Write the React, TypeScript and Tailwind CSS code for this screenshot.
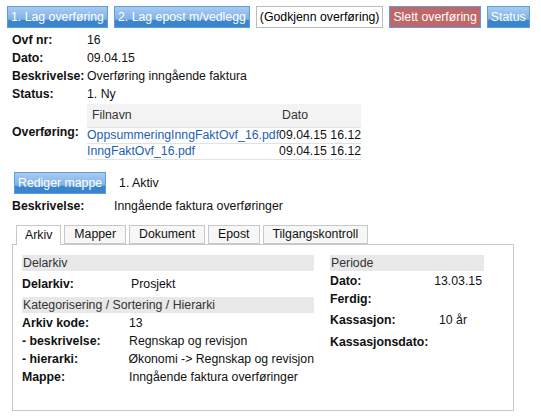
export default function App() {
  const blueBtn =
    "h-[22px] px-[3px] whitespace-nowrap border border-[#5c9de0] text-white leading-none bg-[linear-gradient(#aacbf0,#7eb1e8_62%,#3b85cf_64%,#3b85cf)]"

  return (
    <div className="w-[541px] h-[419px] bg-white text-[12.3px] text-[#111] whitespace-nowrap font-['Liberation_Sans',Arial,sans-serif] overflow-hidden">
      {/* Toolbar */}
      <div className="flex gap-[6px] pl-[7px] pt-[6px]">
        <button className={blueBtn}>1. Lag overføring</button>
        <button className={blueBtn}>2. Lag epost m/vedlegg</button>
        <button className="h-[22px] px-[3px] border border-[#bcbcbc] bg-white text-black leading-none">
          (Godkjenn overføring)
        </button>
        <button className="h-[22px] px-[3px] border border-[#5c9de0] bg-[#c06767] text-white leading-none">
          Slett overføring
        </button>
        <button className={blueBtn}>Status</button>
      </div>

      {/* Info */}
      <div className="pl-[12px] mt-[3px]">
        <div className="flex h-[18px] items-center">
          <div className="w-[75px] font-bold">Ovf nr:</div>
          <div>16</div>
        </div>
        <div className="flex h-[18px] items-center">
          <div className="w-[75px] font-bold">Dato:</div>
          <div>09.04.15</div>
        </div>
        <div className="flex h-[18px] items-center">
          <div className="w-[75px] font-bold">Beskrivelse:</div>
          <div>Overføring inngående faktura</div>
        </div>
        <div className="flex h-[18px] items-center">
          <div className="w-[75px] font-bold">Status:</div>
          <div>1. Ny</div>
        </div>
        <div className="flex items-center mt-[1px]">
          <div className="w-[75px] font-bold">Overføring:</div>
          <div className="grid grid-cols-[auto_auto]">
            <div className="h-[24px] flex items-center pl-[5px] bg-[#f3f3f3] border-b border-[#e2e2e2] text-[#333]">Filnavn</div>
            <div className="h-[24px] flex items-center pl-[3px] bg-[#f3f3f3] border-b border-[#e2e2e2] text-[#333]">Dato</div>
            <a className="h-[16px] flex items-center border-b border-[#e2e2e2] text-[#1f5fb4]">OppsummeringInngFaktOvf_16.pdf</a>
            <div className="h-[16px] flex items-center justify-end border-b border-[#e2e2e2]">09.04.15 16.12</div>
            <a className="h-[16px] flex items-center border-b border-[#e2e2e2] text-[#1f5fb4]">InngFaktOvf_16.pdf</a>
            <div className="h-[16px] flex items-center justify-end border-b border-[#e2e2e2]">09.04.15 16.12</div>
          </div>
        </div>
      </div>

      {/* Mappe */}
      <div className="flex items-center gap-[13px] pl-[14px] mt-[12px]">
        <button className={blueBtn}>Rediger mappe</button>
        <span>1. Aktiv</span>
      </div>
      <div className="flex h-[18px] items-center pl-[12px] mt-[3px]">
        <div className="w-[102px] font-bold">Beskrivelse:</div>
        <div>Inngående faktura overføringer</div>
      </div>

      {/* Tabs */}
      <div className="ml-[12px] mr-[27px] mt-[9px]">
        <div className="flex gap-[3px] pl-[4px] h-[20px] items-end">
          <div className="h-[20px] px-[8px] flex items-center border border-b-0 border-[#c8c8c8] bg-white relative top-[1px]">
            Arkiv
          </div>
          <div className="h-[19px] px-[9px] flex items-center border border-[#c8c8c8] bg-[#f7f7f7]">Mapper</div>
          <div className="h-[19px] px-[9px] flex items-center border border-[#c8c8c8] bg-[#f7f7f7]">Dokument</div>
          <div className="h-[19px] px-[9px] flex items-center border border-[#c8c8c8] bg-[#f7f7f7]">Epost</div>
          <div className="h-[19px] px-[9px] flex items-center border border-[#c8c8c8] bg-[#f7f7f7]">Tilgangskontroll</div>
        </div>
        <div className="h-[167px] border border-[#c8c8c8] pl-[9px] pt-[10px] flex gap-[16px]">
          {/* Left column */}
          <div className="w-[292px]">
            <div className="h-[16px] bg-[#e8e8e8] flex items-center pl-[1px] text-[#333]">Delarkiv</div>
            <div className="flex h-[26px] items-center">
              <div className="w-[109px] font-bold">Delarkiv:</div>
              <div>Prosjekt</div>
            </div>
            <div className="h-[16px] bg-[#e8e8e8] flex items-center pl-[1px] text-[#333]">
              Kategorisering / Sortering / Hierarki
            </div>
            <div className="mt-[1px]">
              {[
                ["Arkiv kode:", "13"],
                ["- beskrivelse:", "Regnskap og revisjon"],
                ["- hierarki:", "Økonomi -> Regnskap og revisjon"],
                ["Mappe:", "Inngående faktura overføringer"],
              ].map(([k, v]) => (
                <div key={k} className="flex h-[18px] items-center">
                  <div className="w-[107px] font-bold">{k}</div>
                  <div>{v}</div>
                </div>
              ))}
            </div>
          </div>

          {/* Right column */}
          <div className="w-[154px]">
            <div className="h-[16px] bg-[#e8e8e8] flex items-center pl-[1px] text-[#333]">Periode</div>
            <div className="flex h-[20px] items-center">
              <div className="w-[106px] font-bold">Dato:</div>
              <div className="flex-1 text-right pr-[2px]">13.03.15</div>
            </div>
            <div className="flex h-[16px] items-center">
              <div className="w-[106px] font-bold">Ferdig:</div>
            </div>
            <div className="flex h-[26px] items-center">
              <div className="w-[109px] font-bold">Kassasjon:</div>
              <div>10 år</div>
            </div>
            <div className="flex h-[18px] items-center">
              <div className="font-bold">Kassasjonsdato:</div>
            </div>
          </div>
        </div>
      </div>
    </div>
  )
}
